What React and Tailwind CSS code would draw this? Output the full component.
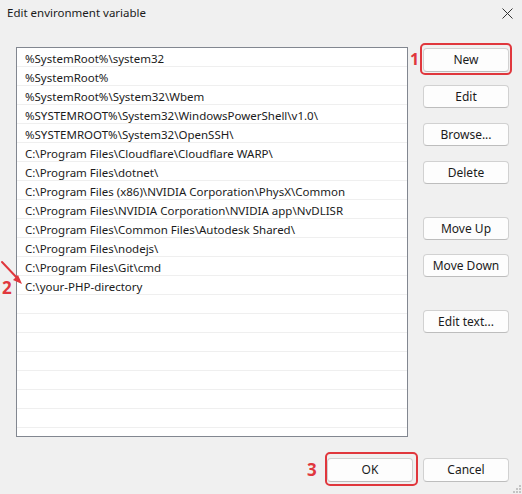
import React from 'react';

const paths = [
    '%SystemRoot%\\system32',
    '%SystemRoot%',
    '%SystemRoot%\\System32\\Wbem',
    '%SYSTEMROOT%\\System32\\WindowsPowerShell\\v1.0\\',
    '%SYSTEMROOT%\\System32\\OpenSSH\\',
    'C:\\Program Files\\Cloudflare\\Cloudflare WARP\\',
    'C:\\Program Files\\dotnet\\',
    'C:\\Program Files (x86)\\NVIDIA Corporation\\PhysX\\Common',
    'C:\\Program Files\\NVIDIA Corporation\\NVIDIA app\\NvDLISR',
    'C:\\Program Files\\Common Files\\Autodesk Shared\\',
    'C:\\Program Files\\nodejs\\',
    'C:\\Program Files\\Git\\cmd',
    'C:\\your-PHP-directory',
];

const rows = [...paths, ...Array(9).fill('')];

const WinButton = ({ children, className = '' }) => (
    <button
        className={`w-[86px] h-[23px] bg-[#fdfdfd] border border-[#d1d1d1] border-b-[#bdbdbd] rounded-[4px] text-[12px] text-[#1b1b1b] flex items-center justify-center ${className}`}
    >
        {children}
    </button>
);

const App = () => {
    return (
        <div
            className="relative w-[522px] h-[494px] bg-[#f0f0f0] text-[#1b1b1b] overflow-hidden"
            style={{ fontFamily: '"Noto Sans", "Open Sans", sans-serif' }}
        >
            {/* title bar */}
            <div className="h-[26px] flex items-center justify-between pl-[7px] pr-[8px]">
                <span className="text-[11.5px]">Edit environment variable</span>
                <svg width="11" height="11" viewBox="0 0 11 11" className="mr-[1px]">
                    <path d="M0.5 0.5 L10.5 10.5 M10.5 0.5 L0.5 10.5" stroke="#333" strokeWidth="1" />
                </svg>
            </div>

            <div className="flex pl-[16px] pt-[21px]">
                {/* path list */}
                <div className="w-[392px] h-[390px] bg-white border border-[#828790] overflow-hidden">
                    {rows.map((p, i) => (
                        <div
                            key={i}
                            className="h-[19px] border-b border-[#efefef] pl-[8px] pt-[3px] flex items-center text-[11.5px] whitespace-nowrap"
                        >
                            {p}
                        </div>
                    ))}
                </div>

                {/* side buttons */}
                <div className="flex flex-col ml-[15px] pt-[1px]">
                    <WinButton className="h-[24px]">New</WinButton>
                    <WinButton className="mt-[13px]">Edit</WinButton>
                    <WinButton className="mt-[15px]">Browse...</WinButton>
                    <WinButton className="mt-[15px]">Delete</WinButton>
                    <WinButton className="mt-[33px]">Move Up</WinButton>
                    <WinButton className="mt-[14px]">Move Down</WinButton>
                    <WinButton className="mt-[33px]">Edit text...</WinButton>
                </div>
            </div>

            {/* footer */}
            <div className="flex justify-end gap-[10px] pr-[13px] mt-[21px]">
                <WinButton className="h-[24px] border-[#005fb8] border-b-[#005fb8]">OK</WinButton>
                <WinButton className="h-[24px]">Cancel</WinButton>
            </div>

            {/* resize grip */}
            <svg width="8" height="8" viewBox="0 0 8 8" className="absolute right-[1px] bottom-[1px]">
                <rect x="6" y="0" width="2" height="2" fill="#c4c4c4" />
                <rect x="3" y="3" width="2" height="2" fill="#c4c4c4" />
                <rect x="6" y="3" width="2" height="2" fill="#c4c4c4" />
                <rect x="0" y="6" width="2" height="2" fill="#c4c4c4" />
                <rect x="3" y="6" width="2" height="2" fill="#c4c4c4" />
                <rect x="6" y="6" width="2" height="2" fill="#c4c4c4" />
            </svg>

            {/* annotations */}
            <div className="absolute left-[420px] top-[43px] w-[92px] h-[32px] border-[2px] border-[#e0373d] rounded-[5px]" />
            <span className="absolute left-[410px] top-[51px] text-[16px] font-bold text-[#e0373d] leading-none">1</span>

            <div className="absolute left-[325px] top-[452px] w-[93px] h-[34px] border-[2px] border-[#e0373d] rounded-[5px]" />
            <span className="absolute left-[307px] top-[461px] text-[17px] font-bold text-[#e0373d] leading-none">3</span>

            <span className="absolute left-[2px] top-[279px] text-[17px] font-bold text-[#e0373d] leading-none">2</span>
            <svg width="26" height="30" viewBox="0 0 26 30" className="absolute left-0 top-[258px]">
                <path d="M2 4 L19 22" stroke="#e0373d" strokeWidth="2" strokeLinecap="round" />
                <path d="M22 26 L13 22 L18 17 Z" fill="#e0373d" />
            </svg>
        </div>
    );
};

export default App;
